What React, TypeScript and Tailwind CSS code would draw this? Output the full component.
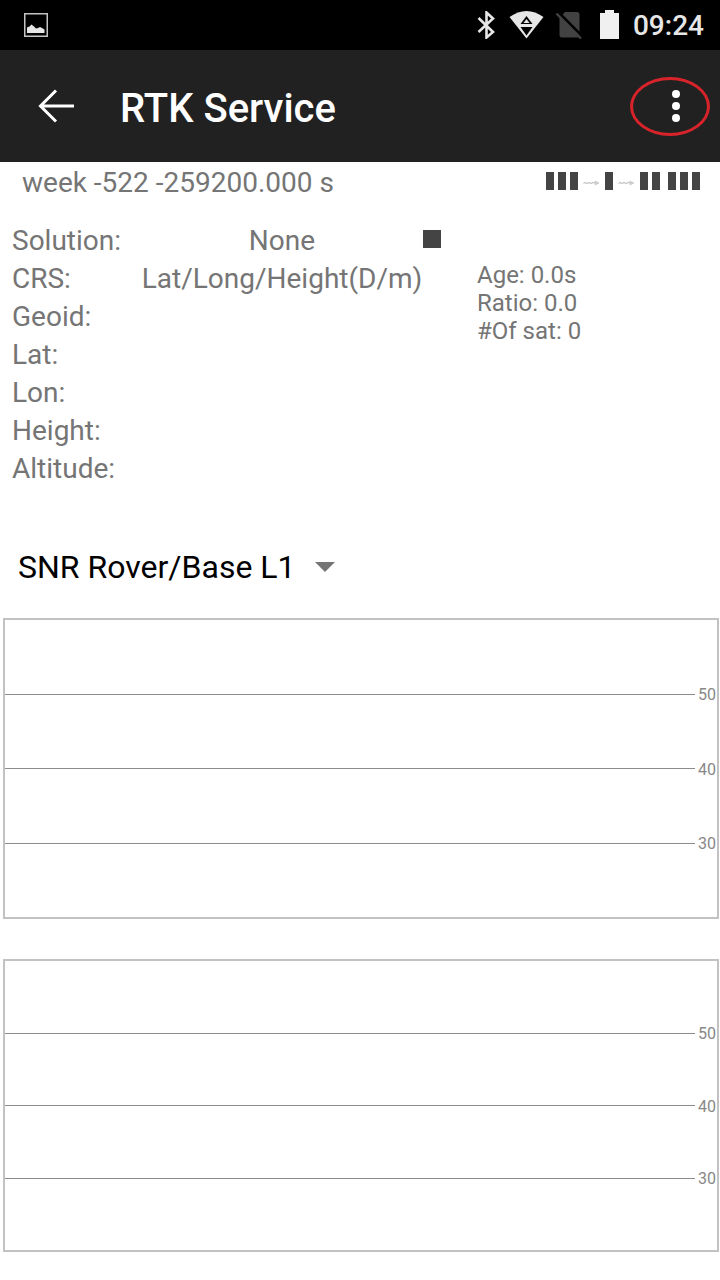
import type { ReactNode } from "react";

const labels = ["Geoid:", "Lat:", "Lon:", "Height:", "Altitude:"];

function StatusBar() {
  return (
    <div className="flex h-[50px] items-center bg-black pr-4 pl-6">
      <svg className="h-6 w-6" viewBox="0 0 24 24" aria-hidden="true">
        <rect x="0.75" y="0.75" width="22.5" height="22.5" fill="none" stroke="#c4c4c4" strokeWidth="1.5" />
        <path d="M3 20V14.5L5.500 13.500L7.500 11.500L10 13.500L12 15.500L14 15L16 14L18 15L20.500 16.500V20Z" fill="#e6e6e6" />
      </svg>
      <div className="ml-auto flex items-center">
        <svg className="h-7 w-[18px]" viewBox="0 0 18 28" aria-hidden="true">
          <path d="M1.500 7L16 21L9.500 26.500V1.500L16 7.500L1.500 21" fill="none" stroke="#e6e6e6" strokeWidth="2.600" />
        </svg>
        <svg className="ml-3.5 h-7 w-[35px]" viewBox="0 0 35 28" aria-hidden="true">
          <path d="M0.500 6Q17.500 -6 34.500 6L17.500 27.500Z" fill="#e6e6e6" />
          <path d="M17.500 5L23.500 13H11.500ZM11.500 16H23.500L17.500 24.500Z" fill="#000" />
          <path d="M17.500 8L20.500 12H14.500Z" fill="#e6e6e6" />
        </svg>
        <svg className="ml-3 h-7 w-[26px]" viewBox="0 0 26 28" aria-hidden="true">
          <path d="M9 1H21Q23.500 1 23.500 3.500V24Q23.500 26.500 21 26.500H6Q3.500 26.500 3.500 24V7Z" fill="#424242" />
          <path d="M2.500 1.500L26 25" stroke="#000" strokeWidth="3" />
          <path d="M0.500 2.500L25 27.500" stroke="#424242" strokeWidth="2.400" />
        </svg>
        <svg className="ml-[18px] h-[30px] w-[19px]" viewBox="0 0 19 30" aria-hidden="true">
          <path d="M0 3H5V0H14V3H19V29H0Z" fill="#f0f0f0" />
        </svg>
        <span className="ml-3.5 pt-0.5 text-[28px] leading-[48px] font-medium text-[#e6e6e6]">09:24</span>
      </div>
    </div>
  );
}

function AppBar() {
  return (
    <header className="relative flex h-28 items-center bg-[#212121] pr-5 pl-9">
      <button type="button" aria-label="Back" className="flex h-12 w-10 items-center">
        <svg className="h-10 w-10" viewBox="0 0 40 40" aria-hidden="true">
          <path d="M38 20H5M20 4.500L4.500 20L20 35.500" fill="none" stroke="#fff" strokeWidth="3" />
        </svg>
      </button>
      <h1 className="ml-11 pt-1.5 text-[40px] leading-[48px] font-medium text-white">RTK Service</h1>
      <button type="button" aria-label="More options" className="ml-auto flex h-12 w-12 items-center justify-center">
        <svg className="h-10 w-10" viewBox="0 0 40 40" fill="#fff" aria-hidden="true">
          <circle cx="20" cy="8" r="4" />
          <circle cx="20" cy="20" r="4" />
          <circle cx="20" cy="32" r="4" />
        </svg>
      </button>
      <span className="pointer-events-none absolute top-[27px] right-[10px] h-[59px] w-20 rounded-[50%] border-[3px] border-[#d8232b]" />
    </header>
  );
}

function Bars({ count }: { count: number }) {
  return (
    <span className="flex gap-1">
      {Array.from({ length: count }, (_, i) => (
        <span key={i} className="h-[18px] w-2 bg-[#444]" />
      ))}
    </span>
  );
}

function StreamArrow() {
  return (
    <svg className="mx-[5px] mt-1 h-2 w-[17px]" viewBox="0 0 17 8" fill="none" stroke="#c4c4c4" aria-hidden="true">
      <path d="M0.500 4.500L2 3.500L4 4.500L6 3.500L8 4.500L10 3.500L12 4H15" strokeWidth="1.200" />
      <path d="M12 2L16 4L12 6Z" fill="#d0d0d0" strokeWidth="0.600" />
    </svg>
  );
}

function Row({ label, children }: { label: string; children?: ReactNode }) {
  return (
    <div className="flex">
      <dt className="w-[129px]">{label}</dt>
      <dd className="flex-1 text-center">{children}</dd>
    </div>
  );
}

function Tick({ value }: { value: number }) {
  return (
    <div className="flex h-px items-center">
      <span className="h-px flex-1 bg-[#8c8c8c]" />
      <span className="w-[22px] pt-0.5 pr-px text-right text-[16px] leading-4 text-[#888]">{value}</span>
    </div>
  );
}

function Chart({ label, height }: { label: string; height: string }) {
  return (
    <section
      aria-label={label}
      className={`${height} mr-px ml-[3px] flex flex-col justify-evenly border-2 border-[#c2c2c2]`}
    >
      <Tick value={50} />
      <Tick value={40} />
      <Tick value={30} />
    </section>
  );
}

export default function App() {
  return (
    <div className="min-h-screen bg-white font-['Roboto',sans-serif] text-[28px] leading-[38px] text-[#757575]">
      <StatusBar />
      <AppBar />
      <main>
        <div className="flex justify-between pt-0.5 pr-5 pl-[22px]">
          <span>week -522 -259200.000 s</span>
          <span className="flex items-center pb-1">
            <Bars count={3} />
            <StreamArrow />
            <Bars count={1} />
            <StreamArrow />
            <span className="flex gap-2">
              <Bars count={2} />
              <Bars count={3} />
            </span>
          </span>
        </div>
        <div className="flex pt-5 pl-3">
          <dl className="w-[411px]">
            <Row label="Solution:">None</Row>
            <Row label="CRS:">Lat/Long/Height(D/m)</Row>
            {labels.map((label) => (
              <Row key={label} label={label} />
            ))}
          </dl>
          <div>
            <span className="mt-2 block h-[18px] w-[18px] bg-[#444]" />
            <ul className="mt-[13px] pl-[54px] text-2xl leading-7">
              <li>Age: 0.0s</li>
              <li>Ratio: 0.0</li>
              <li>#Of sat: 0</li>
            </ul>
          </div>
        </div>
        <div className="flex items-center pt-[55px] pb-[27px] pl-[18px]">
          <select
            aria-label="Chart type"
            className="h-12 w-[315px] appearance-none bg-transparent text-[32px] leading-[48px] text-black"
          >
            <option>SNR Rover/Base L1</option>
          </select>
          <svg className="pointer-events-none -ml-[18px] h-2.5 w-5" viewBox="0 0 20 10" aria-hidden="true">
            <path d="M0 0H20L10 10Z" fill="#757575" />
          </svg>
        </div>
        <div className="flex flex-col gap-10 pb-7">
          <Chart label="Rover signal strength" height="h-[301px]" />
          <Chart label="Base signal strength" height="h-[293px]" />
        </div>
      </main>
    </div>
  );
}
